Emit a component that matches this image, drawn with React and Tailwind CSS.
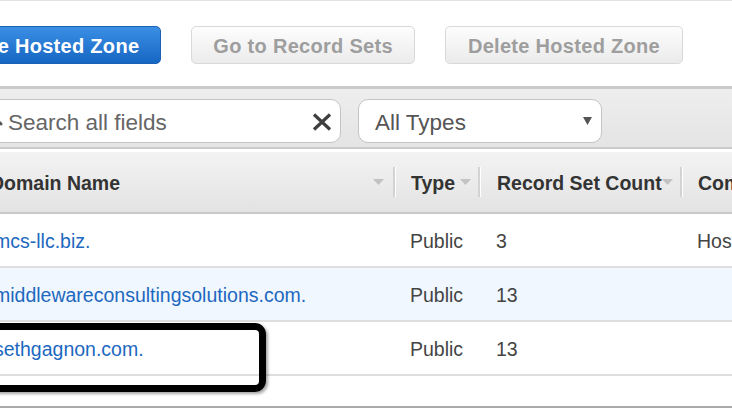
import React from "react";

function SortArrow() {
  return (
    <svg width="11" height="6" viewBox="0 0 11 6" className="shrink-0">
      <path d="M0 0 H11 L5.5 6 Z" fill="#c2c2c2" />
    </svg>
  );
}

function HeaderSep() {
  return <div className="w-[3px] h-[30px] shrink-0 border-l-2 border-[#d3d3d3] bg-white" />;
}

const rows = [
  { name: "mcs-llc.biz.", type: "Public", count: "3", comment: "Hosted zone created by Route53 Registrar", alt: false },
  { name: "middlewareconsultingsolutions.com.", type: "Public", count: "13", comment: "", alt: true },
  { name: "sethgagnon.com.", type: "Public", count: "13", comment: "", alt: false },
];

export default function App() {
  return (
    <div className="relative w-[732px] h-[410px] overflow-hidden bg-white font-['Liberation_Sans',Arial,sans-serif]">
      <div className="h-px bg-[#e2e2e2]" />

      {/* action buttons */}
      <div className="flex gap-[30px] pt-[25px] pb-[22px] -ml-[77px] whitespace-nowrap text-[20px] font-bold tracking-[0.3px]">
        <button className="h-[38px] px-[21px] pt-[1px] rounded-[5px] border border-[#1b61b5] bg-gradient-to-b from-[#3a8fe4] to-[#1666c3] text-white">
          Create Hosted Zone
        </button>
        <button className="h-[38px] px-[21px] pt-[1px] rounded-[5px] border border-[#d9d9d9] bg-gradient-to-b from-[#fdfdfd] to-[#ebebeb] text-[#9e9e9e]">
          Go to Record Sets
        </button>
        <button className="h-[38px] px-[22px] pt-[1px] rounded-[5px] border border-[#d9d9d9] bg-gradient-to-b from-[#fdfdfd] to-[#ebebeb] text-[#9e9e9e]">
          Delete Hosted Zone
        </button>
      </div>

      {/* filter toolbar */}
      <div className="border-t-[3px] border-b-2 border-[#cbcbcb] bg-gradient-to-b from-[#eeeeee] to-[#e4e4e4] h-[63px] pt-[10px]">
        <div className="flex gap-[17px] -ml-[30px]">
          <div className="relative w-[371px] h-[44px] rounded-[10px] border border-[#c4c4c4] bg-white flex items-center pl-[37px] pr-[8px] pt-[3px]">
            <svg width="18" height="18" viewBox="0 0 18 18" className="absolute left-[14px] top-[8px]">
              <circle cx="7" cy="7" r="5.5" fill="none" stroke="#555" strokeWidth="2.2" />
              <path d="M11 11 L16 16" stroke="#555" strokeWidth="3" strokeLinecap="round" />
            </svg>
            <span className="flex-1 text-[22.5px] text-[#666]">Search all fields</span>
            <svg width="20" height="18" viewBox="0 0 20 18" className="-mt-[2px]">
              <path d="M2 1.5 L18 16.5 M18 1.5 L2 16.5" stroke="#3f3f3f" strokeWidth="3.2" />
            </svg>
          </div>
          <div className="w-[244px] h-[44px] rounded-[10px] border border-[#c4c4c4] bg-white flex items-center justify-between pl-[16px] pr-[9px]">
            <span className="text-[22.5px] text-[#555] pt-[3px]">All Types</span>
            <svg width="9" height="8" viewBox="0 0 9 8">
              <path d="M0 0 H9 L4.5 8 Z" fill="#555" />
            </svg>
          </div>
        </div>
      </div>
      <div className="h-[3px] bg-white" />

      {/* table header */}
      <div className="flex items-center h-[62px] border-b-2 border-[#c9c9c9] bg-gradient-to-b from-[#f3f3f3] to-[#e3e3e3] -ml-[16px] whitespace-nowrap text-[19.5px] font-bold text-[#333]">
        <div className="w-[409px] shrink-0 flex items-center justify-between pl-[6px] pr-[9px]">
          <span className="pt-[3px]">Domain Name</span>
          <SortArrow />
        </div>
        <HeaderSep />
        <div className="w-[82px] shrink-0 flex items-center justify-between pl-[15px] pr-[7px]">
          <span className="pt-[3px]">Type</span>
          <SortArrow />
        </div>
        <HeaderSep />
        <div className="w-[199px] shrink-0 flex items-center justify-between pl-[16px] pr-[9px]">
          <span className="pt-[3px]">Record Set Count</span>
          <SortArrow />
        </div>
        <HeaderSep />
        <div className="shrink-0 pl-[15px] pt-[3px]">Comment</div>
      </div>

      {/* table body */}
      <div className="-ml-[16px] whitespace-nowrap text-[19.5px]">
        {rows.map((r) => (
          <div
            key={r.name}
            className={`flex items-center h-[54px] pt-[3px] border-b-2 border-[#dedede] ${r.alt ? "bg-[#f0f7fe]" : "bg-white"}`}
          >
            <div className="w-[412px] shrink-0 pl-[10px] text-[#1d68c0]">{r.name}</div>
            <div className="w-[86px] shrink-0 pl-[14px] text-[#444]">{r.type}</div>
            <div className="w-[200px] shrink-0 pl-[14px] text-[#444]">{r.count}</div>
            <div className="shrink-0 pl-[15px] text-[#444]">{r.comment}</div>
          </div>
        ))}
        <div className="h-[32px] border-b-2 border-[#a9a9a9] bg-white" />
      </div>

      {/* annotation box */}
      <div className="absolute left-[-20px] top-[323px] w-[286px] h-[69px] border-[7px] border-black rounded-[11px] shadow-[2px_2px_3px_rgba(0,0,0,0.35)]" />
    </div>
  );
}
